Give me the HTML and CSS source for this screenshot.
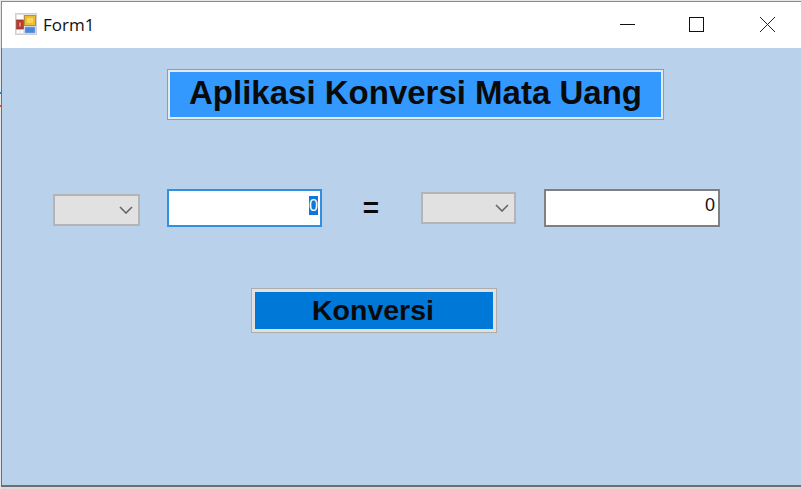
FILE: index.html
```html
<!DOCTYPE html>
<html lang="id">
<head>
<meta charset="utf-8">
<title>Form1</title>
<link rel="stylesheet" href="styles.css">
</head>
<body>
<div class="window">
  <header class="titlebar">
    <svg class="app-icon" width="22" height="22" viewBox="0 0 22 22">
      <rect x="0.5" y="0.5" width="21" height="21" fill="#e4e4e4" stroke="#cfcfcf"/>
      <rect x="2" y="2" width="6" height="4" fill="#fff"/>
      <rect x="1.500" y="7" width="7" height="9" fill="#b83a2e" stroke="#93302a" stroke-width="0.6"/>
      <rect x="4" y="9.500" width="2" height="4" fill="#e08a7e"/>
      <rect x="2" y="17" width="2.500" height="3" fill="#fff"/>
      <rect x="5.500" y="17" width="2.500" height="3" fill="#fff"/>
      <rect x="9.500" y="2.500" width="11" height="10" fill="#f0bc2c" stroke="#b59040"/>
      <rect x="12" y="5" width="6" height="5" fill="#f8d660"/>
      <rect x="10" y="14" width="10" height="6" fill="#4a88e0" stroke="#8cb4ea" stroke-width="0.6"/>
    </svg>
    <span class="title-text">Form1</span>
    <div class="win-controls">
      <svg class="win-btn" width="70" height="46" viewBox="0 0 70 46"><path d="M29 22.500H44" stroke="#111" fill="none"/></svg>
      <svg class="win-btn" width="70" height="46" viewBox="0 0 70 46"><rect x="28.500" y="15.500" width="14" height="14" stroke="#111" fill="none"/></svg>
      <svg class="win-btn" width="70" height="46" viewBox="0 0 70 46"><path d="M29 15L44 30M44 15L29 30" stroke="#222" fill="none"/></svg>
    </div>
  </header>
  <main class="form">
    <div class="heading">Aplikasi Konversi Mata Uang</div>
    <div class="converter">
      <div class="combo combo-from"><svg class="chev" width="14" height="8" viewBox="0 0 14 8"><path d="M1 1L7 7L13 1" stroke="#666" stroke-width="1.600" fill="none"/></svg></div>
      <div class="field field-active"><span class="sel">0</span></div>
      <div class="equals">=</div>
      <div class="combo combo-to"><svg class="chev" width="14" height="8" viewBox="0 0 14 8"><path d="M1 1L7 7L13 1" stroke="#666" stroke-width="1.600" fill="none"/></svg></div>
      <div class="field field-result"><span class="val">0</span></div>
    </div>
    <button class="convert" type="button">Konversi</button>
  </main>
  <div class="strip"></div>
</div>
</body>
</html>
```
FILE: styles.css
```css
* { box-sizing: border-box; }
html, body { margin: 0; padding: 0; }
body { width: 801px; height: 489px; overflow: hidden; font-family: "Liberation Sans", Arial, sans-serif; background: linear-gradient(to bottom, #e6e6e6 0 92px, #2f7fc8 92px 94px, #e6e6e6 94px 105px, #d8502a 105px 107px, #e6e6e6 107px); }
.window { width: 801px; height: 489px; display: flex; flex-direction: column; padding: 1px 0 0 1px; }
.titlebar { height: 47px; flex: none; display: flex; align-items: center; background: #fff; border-top: 1px solid #8a8a8a; border-left: 1px solid #8a8a8a; padding-left: 13px; }
.app-icon { flex: none; margin-top: -3px; }
.title-text { font-family: "Segoe UI", "Open Sans", "Noto Sans", sans-serif; font-size: 17px; color: #111; margin-left: 6px; margin-top: -1px; }
.win-controls { margin-left: auto; display: flex; height: 46px; align-self: flex-start; }
.win-btn { display: block; }
.form { height: 439px; flex: none; background: #b9d1ea; border-left: 1px solid #6e6e6e; border-bottom: 2px solid #6e6e6e; display: flex; flex-direction: column; padding-top: 21px; }
.heading { width: 497px; height: 51px; margin-left: 165px; background: #3399ff; border: 1px solid #9a9a9a; outline: 2px solid #e6e9ee; outline-offset: -3px; color: #0a0a0a; font-weight: 700; font-size: 33px; line-height: 45px; text-align: center; }
.converter { display: flex; align-items: center; height: 38px; margin-top: 69px; margin-left: 51px; }
.combo { height: 32px; background: #e1e1e1; border: 2px solid #b4b4b4; display: flex; align-items: center; justify-content: flex-end; padding-right: 5px; }
.combo-from { width: 87px; margin-top: 3px; }
.combo-to { width: 95px; margin-top: -1px; }
.field { height: 38px; background: #fff; display: flex; align-items: center; justify-content: flex-end; font-size: 18px; color: #111; }
.field-active { width: 155px; margin-left: 27px; border: 2px solid #2f8fe0; padding-right: 2px; }
.field-result { width: 176px; margin-left: 28px; border: 2px solid #808080; padding-right: 3px; }
.sel { background: #0f78d6; color: #fff; width: 9px; height: 19px; line-height: 19px; text-align: center; font-size: 16px; margin-top: -6px; }
.val { margin-top: -6px; }
.equals { width: 20px; margin-left: 39px; margin-right: 40px; font-size: 28px; font-weight: 700; line-height: 38px; text-align: center; color: #0a0a0a; }
.convert { display: block; width: 246px; height: 45px; margin: 61px 0 0 249px; padding: 0 2px 0 0; background: #0078d7; border: 1px solid #adadad; outline: 3px solid #e1e1e1; outline-offset: -4px; font-family: inherit; font-weight: 700; font-size: 28.500px; line-height: 43px; color: #0a0a0a; text-align: center; }
.strip { flex: 1; background: #d9d9d9; }
```
